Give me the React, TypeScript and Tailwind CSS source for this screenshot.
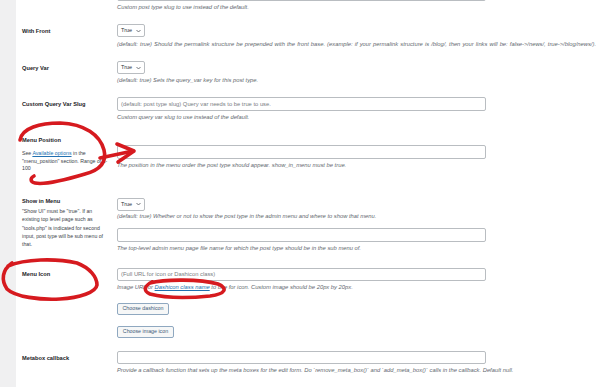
import React from 'react';

const label = 'text-[5.7px] leading-[8px] font-bold text-[#1d2327] whitespace-nowrap';
const desc = 'text-[5.8px] leading-[8px] italic text-[#646970] whitespace-nowrap';
const help = 'text-[5.2px] text-[#3c434a] whitespace-nowrap';
const input =
  'w-[369px] bg-white border border-[#b9bdc1] rounded-[2px] px-[3px] flex items-center text-[5.8px] text-[#787c82]';
const button =
  'bg-[#f6f7f7] border border-[#8fa8c0] rounded-[2px] text-[5.3px] text-[#3d5b78] flex items-center justify-center';

function Select() {
  return (
    <div className="w-[28px] h-[13px] bg-white border border-[#b9bdc1] rounded-[2px] flex items-center justify-between pl-[3px] pr-[3px] text-[5.5px] text-[#2c3338]">
      <span>True</span>
      <svg width="5" height="4" viewBox="0 0 10 7" fill="none">
        <path d="M1 1.5 L5 5.5 L9 1.5" stroke="#50575e" strokeWidth="1.6" />
      </svg>
    </div>
  );
}

function Annotations() {
  return (
    <svg
      className="absolute inset-0 pointer-events-none"
      width="600"
      height="387"
      viewBox="0 0 600 387"
      fill="none"
      stroke="#d61a1f"
      strokeWidth="3.6"
      strokeLinecap="round"
      strokeLinejoin="round"
    >
      {/* menu position loop + arrow */}
      <path d="M20 140 C22 128 40 123 60 123 C85 124 100 135 104 150 C107 162 100 170 85 174 C65 180 45 185 35 183 C30 182 30 178 34 176" />
      <path d="M100 158 L133 151" />
      <path d="M117 144 L134 151 L118 162" />
      {/* menu icon loop */}
      <path d="M8 266 C25 259 55 258 77 263 C90 268 97 277 97 285 C96 292 80 298 60 299 C40 300 15 297 7 289 C1 280 2 270 12 263" />
      {/* dashicon link squiggle */}
      <path d="M150 283 C165 279 200 279 218 284 C228 288 226 294 210 296 C190 298 165 298 150 294 C143 291 144 286 152 282" />
    </svg>
  );
}

export default function App() {
  return (
    <div className="relative w-[600px] h-[387px] overflow-hidden flex bg-white font-['Liberation_Sans',Arial,sans-serif]">
      <div className="w-[16px] h-full bg-[#f0f0f1] shrink-0" />
      <div className="flex-1 pl-[6px]">
        {/* tail of previous row */}
        <div className="flex">
          <div className="w-[95px] shrink-0" />
          <div>
            <div className={`${input} h-[14px] -mt-[13px]`} />
            <div className={`${desc} mt-[2px]`}>Custom post type slug to use instead of the default.</div>
          </div>
        </div>

        {/* With Front */}
        <div className="flex pt-[13px]">
          <div className={`w-[95px] shrink-0 pt-[3px] ${label}`}>With Front</div>
          <div>
            <Select />
            <div className="mt-[3px] w-[479px] text-[5.8px] leading-[8px] italic text-[#646970] text-justify [text-align-last:justify]">
              (default: true) Should the permalink structure be prepended with the front base. (example: if your
              permalink structure is /blog/, then your links will be: false-&gt;/news/, true-&gt;/blog/news/).
            </div>
          </div>
        </div>

        {/* Query Var */}
        <div className="flex pt-[13px]">
          <div className={`w-[95px] shrink-0 pt-[3px] ${label}`}>Query Var</div>
          <div>
            <Select />
            <div className={`${desc} mt-[2px]`}>(default: true) Sets the query_var key for this post type.</div>
          </div>
        </div>

        {/* Custom Query Var Slug */}
        <div className="flex pt-[13px]">
          <div className={`w-[95px] shrink-0 pt-[3px] ${label}`}>Custom Query Var Slug</div>
          <div>
            <div className={`${input} h-[14px]`}>(default: post type slug) Query var needs to be true to use.</div>
            <div className={`${desc} mt-[2px]`}>Custom query var slug to use instead of the default.</div>
          </div>
        </div>

        {/* Menu Position */}
        <div className="flex pt-[15px]">
          <div className="w-[95px] shrink-0">
            <div className={label}>Menu Position</div>
            <div className={`${help} leading-[7.5px] mt-[6px]`}>
              See <span className="text-[#2271b1] underline">Available options</span> in the
              <br />
              "menu_position" section. Range of 1-
              <br />
              100
            </div>
          </div>
          <div className="pt-[9px]">
            <div className={`${input} h-[14px]`} />
            <div className={`${desc} mt-[2px]`}>
              The position in the menu order the post type should appear. show_in_menu must be true.
            </div>
          </div>
        </div>

        {/* Show in Menu */}
        <div className="flex pt-[24px]">
          <div className="w-[95px] shrink-0">
            <div className={label}>Show in Menu</div>
            <div className={`${help} leading-[8.25px] mt-[2.5px]`}>
              "Show UI" must be "true". If an
              <br />
              existing top level page such as
              <br />
              "tools.php" is indicated for second
              <br />
              input, post type will be sub menu of
              <br />
              that.
            </div>
          </div>
          <div className="pt-[1px]">
            <Select />
            <div className={`${desc} mt-[1px]`}>
              (default: true) Whether or not to show the post type in the admin menu and where to show that menu.
            </div>
            <div className={`${input} h-[14px] mt-[8px]`} />
            <div className={`${desc} mt-[2px]`}>
              The top-level admin menu page file name for which the post type should be in the sub menu of.
            </div>
          </div>
        </div>

        {/* Menu Icon */}
        <div className="flex pt-[16px]">
          <div className={`w-[95px] shrink-0 pt-[2px] ${label}`}>Menu Icon</div>
          <div>
            <div className={`${input} h-[13px]`}>(Full URL for icon or Dashicon class)</div>
            <div className={`${desc} mt-[2px]`}>
              Image URL or <span className="text-[#2271b1] underline">Dashicon class name</span> to use for icon.
              Custom image should be 20px by 20px.
            </div>
            <div className={`${button} w-[52px] h-[12px] mt-[12px]`}>Choose dashicon</div>
            <div className={`${button} w-[57px] h-[12px] mt-[11px]`}>Choose image icon</div>
          </div>
        </div>

        {/* Metabox callback */}
        <div className="flex pt-[13px]">
          <div className={`w-[95px] shrink-0 pt-[3px] ${label}`}>Metabox callback</div>
          <div>
            <div className={`${input} h-[13px]`} />
            <div className={`${desc} mt-[2px]`}>
              Provide a callback function that sets up the meta boxes for the edit form. Do `remove_meta_box()` and
              `add_meta_box()` calls in the callback. Default null.
            </div>
          </div>
        </div>
      </div>
      <Annotations />
    </div>
  );
}
